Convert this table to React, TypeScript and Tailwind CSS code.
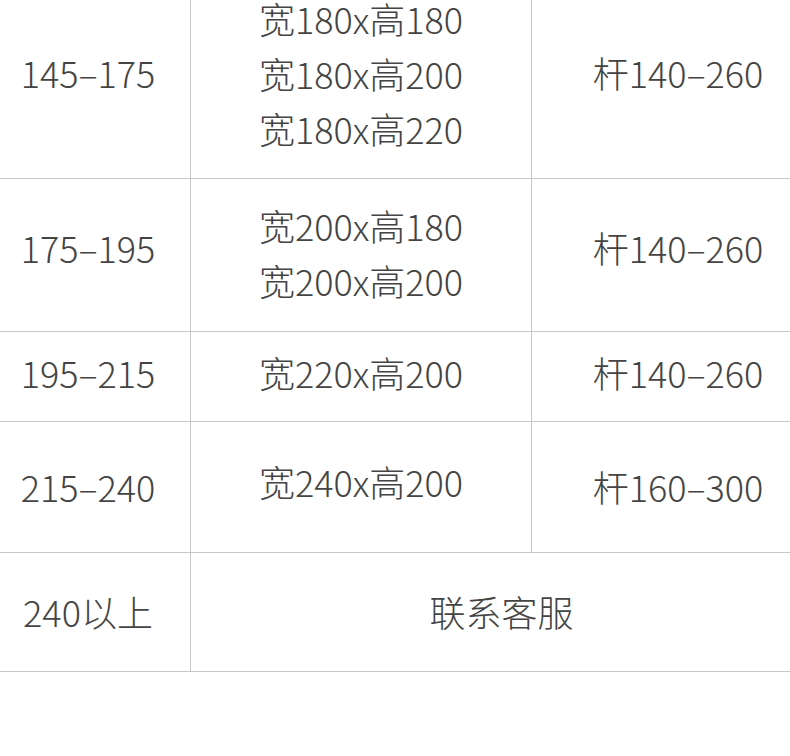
const rows: { range: string; sizes: string[]; rod: string; h: string; pad: string; padMid: string }[] = [
  { range: "145–175", sizes: ["宽180x高180", "宽180x高200", "宽180x高220"], rod: "杆140–260", h: "h-[207px]", pad: "pb-[6px]", padMid: "pb-[4px]" },
  { range: "175–195", sizes: ["宽200x高180", "宽200x高200"], rod: "杆140–260", h: "h-[153px]", pad: "pb-[16px]", padMid: "pb-[4px]" },
  { range: "195–215", sizes: ["宽220x高200"], rod: "杆140–260", h: "h-[90px]", pad: "pb-[8px]", padMid: "pb-[8px]" },
  { range: "215–240", sizes: ["宽240x高200"], rod: "杆160–300", h: "h-[131px]", pad: "pb-[2px]", padMid: "pb-[12px]" },
];

const cell = "flex flex-col items-center justify-center border-b border-r border-[#c8c8c8]";

export default function App() {
  return (
    <div className="h-[756px] w-[790px] overflow-hidden bg-white">
      <div
        className="-ml-[14px] -mt-[28px] grid w-[839px] grid-cols-[205px_341px_293px] text-[36px] font-light leading-[55px] text-[#444444]"
        style={{ fontFamily: '"Noto Sans CJK SC", "Noto Sans", sans-serif' }}
      >
        {rows.map((r) => (
          <div key={r.range} className="contents">
            <div className={`${cell} ${r.h} ${r.pad}`}>{r.range}</div>
            <div className={`${cell} ${r.h} ${r.padMid}`}>
              {r.sizes.map((s) => (
                <span key={s}>{s}</span>
              ))}
            </div>
            <div className={`${cell} ${r.h} ${r.pad}`}>{r.rod}</div>
          </div>
        ))}
        <div className={`${cell} h-[119px] pb-[2px]`}>240以上</div>
        <div className={`${cell} col-span-2 h-[119px] pb-[2px] pr-[12px]`}>联系客服</div>
      </div>
    </div>
  );
}
